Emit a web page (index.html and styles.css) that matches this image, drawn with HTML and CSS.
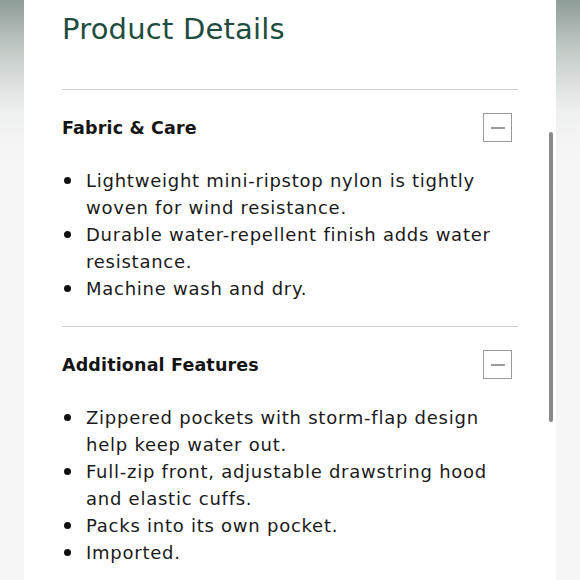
FILE: index.html
```html
<!DOCTYPE html>
<html lang="en">
<head>
<meta charset="utf-8">
<title>Product Details</title>
<link rel="stylesheet" href="styles.css">
</head>
<body>
<div class="frame">
  <div class="side"></div>
  <main class="panel">
    <h1 class="title">Product Details</h1>
    <section class="section">
      <div class="section-head">
        <h2 class="section-title">Fabric &amp; Care</h2>
        <button class="toggle" aria-label="Collapse"><span class="minus"></span></button>
      </div>
      <ul class="bullets">
        <li>Lightweight mini-ripstop nylon is tightly woven for wind resistance.</li>
        <li>Durable water-repellent finish adds water resistance.</li>
        <li>Machine wash and dry.</li>
      </ul>
    </section>
    <section class="section">
      <div class="section-head">
        <h2 class="section-title">Additional Features</h2>
        <button class="toggle" aria-label="Collapse"><span class="minus"></span></button>
      </div>
      <ul class="bullets">
        <li>Zippered pockets with storm-flap design help keep water out.</li>
        <li>Full-zip front, adjustable drawstring hood and elastic cuffs.</li>
        <li>Packs into its own pocket.</li>
        <li>Imported.</li>
      </ul>
    </section>
    <div class="scroll-thumb"></div>
  </main>
  <div class="side"></div>
</div>
</body>
</html>
```
FILE: styles.css
```css
html, body {
  margin: 0;
  padding: 0;
  height: 100%;
  overflow: hidden;
}
body {
  font-family: "DejaVu Sans", "Open Sans", sans-serif;
  color: #1a1a1a;
  background: #f6f6f6;
}
.frame {
  display: flex;
  height: 580px;
}
.side {
  width: 24px;
  flex: none;
  background: linear-gradient(180deg, #8e9c97 0px, #c3cbc7 50px, #eef0ef 110px, #f6f6f6 160px, #f7f7f7 100%);
}
.panel {
  position: relative;
  width: 532px;
  flex: none;
  background: #ffffff;
  box-sizing: border-box;
  padding: 0 38px;
}
.title {
  margin: 0;
  padding-top: 11px;
  height: 89px;
  box-sizing: border-box;
  font-size: 29px;
  line-height: 36px;
  letter-spacing: 0.2px;
  font-weight: 400;
  color: #1e4d3f;
}
.section {
  border-top: 1px solid #d0d0d0;
  padding-bottom: 24px;
}
.section-head {
  display: flex;
  align-items: center;
  justify-content: space-between;
  padding: 23px 6px 0 0;
}
.section-title {
  margin: 0;
  font-size: 17.5px;
  letter-spacing: 0.15px;
  font-weight: 700;
  color: #151515;
}
.toggle {
  width: 29px;
  height: 29px;
  box-sizing: border-box;
  border: 1.5px solid #9a9a9a;
  background: #fff;
  padding: 0;
  display: flex;
  align-items: center;
  justify-content: center;
}
.minus {
  width: 14px;
  height: 2px;
  background: #9a9a9a;
}
.bullets {
  list-style: none;
  margin: 25px 0 0;
  padding: 0;
  font-size: 18px;
  letter-spacing: 0.75px;
  line-height: 27px;
}
.bullets li {
  position: relative;
  padding-left: 24px;
}
.bullets li::before {
  content: "";
  position: absolute;
  left: 2px;
  top: 10px;
  width: 7px;
  height: 7px;
  border-radius: 50%;
  background: #111;
}
.scroll-thumb {
  position: absolute;
  left: 525px;
  top: 132px;
  width: 4px;
  height: 290px;
  border-radius: 2px;
  background: #8a8a8a;
}
```
